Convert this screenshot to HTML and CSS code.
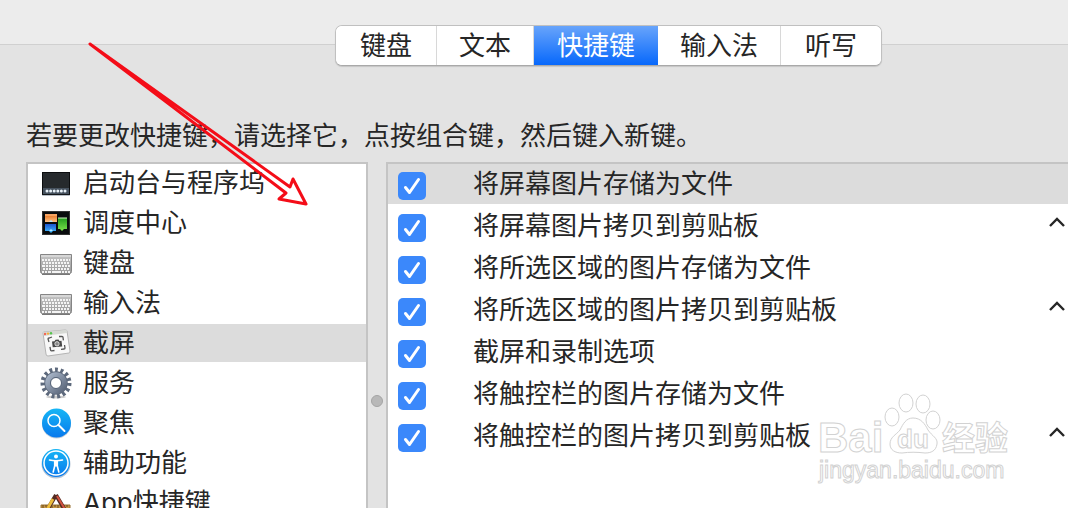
FILE: index.html
```html
<!DOCTYPE html>
<html lang="zh-CN">
<head>
<meta charset="utf-8">
<title>键盘</title>
<link rel="stylesheet" href="styles.css">
</head>
<body>
<header class="toolbar">
  <nav class="tabs">
    <button class="tab" type="button">键盘</button>
    <button class="tab" type="button">文本</button>
    <button class="tab tab-active" type="button">快捷键</button>
    <button class="tab" type="button">输入法</button>
    <button class="tab" type="button">听写</button>
  </nav>
</header>
<main class="content">
  <p class="intro">若要更改快捷键，请选择它，点按组合键，然后键入新键。</p>
  <div class="panes">
    <div class="categories">
      <button class="category" type="button">
        <svg class="icon" viewBox="0 0 32 32"><rect x="2" y="6" width="28" height="23" rx="1" fill="#b9c0c8"/><rect x="2" y="5" width="28" height="23" fill="#14171a"/><rect x="3" y="6" width="26" height="15" fill="#262a2d"/><path d="M2 21h28v6H2z" fill="#46525f"/><path d="M2.500 27V5.500h27V27" fill="none" stroke="#0b0d0f"/><g fill="#e8f1f8"><circle cx="7" cy="24" r="1.500"/><circle cx="10.600" cy="24" r="1.500"/><circle cx="14.200" cy="24" r="1.500"/><circle cx="17.800" cy="24" r="1.500"/><circle cx="21.400" cy="24" r="1.500"/><circle cx="25" cy="24" r="1.500"/></g></svg>
        启动台与程序坞
      </button>
      <button class="category" type="button">
        <svg class="icon" viewBox="0 0 32 32"><defs><linearGradient id="or" x2="0" y2="1"><stop stop-color="#e36a16"/><stop offset="1" stop-color="#ffc184"/></linearGradient><linearGradient id="bl" x2="0" y2="1"><stop stop-color="#1c55cf"/><stop offset="1" stop-color="#42c0ff"/></linearGradient><linearGradient id="gr" x2="0" y2="1"><stop stop-color="#219b1d"/><stop offset="1" stop-color="#7be34c"/></linearGradient></defs><rect x="2.500" y="4.500" width="27" height="23" fill="#090b0d" stroke="#333"/><path d="M5 7h12v8H5z" fill="url(#or)"/><path d="M5 7h12v2H5z" fill="#f7a361"/><path d="M5 17h11v7h-3l-2 2-2-2H5z" fill="url(#bl)"/><path d="M18 11h9v11h-3l-2 2-2-2h-2z" fill="url(#gr)"/><path d="M18 11h9" stroke="#d6f5c5"/><path d="M9 15l2-2 2 2zM9 24l2-2 2 2z" fill="#b6e7ff"/></svg>
        调度中心
      </button>
      <button class="category" type="button">
        <svg class="icon" viewBox="0 0 32 32"><defs><linearGradient id="kb" x2="0" y2="1"><stop stop-color="#c6c6c6"/><stop offset="1" stop-color="#989898"/></linearGradient></defs><path d="M.5 7.500h31v17q0 2-2 2h-27q-2 0-2-2z" fill="url(#kb)" stroke="#858585"/><path d="M1 9h30" stroke="#d6d6d6" stroke-width="2"/><g stroke="#f4f4f4" stroke-width="2"><path d="M2 13h28" stroke-dasharray="2 1"/><path d="M3 16h27" stroke-dasharray="2 1"/><path d="M2 19h28" stroke-dasharray="3 1 2 1 2 1 2 1 2 1"/><path d="M3 22h27" stroke-dasharray="2 1"/><path d="M2 25h28" stroke-dasharray="2 1 2 1 3 1 9 1 2 1 2 1"/></g><path d="M2 27.500h28" stroke="#777"/></svg>
        键盘
      </button>
      <button class="category" type="button">
        <svg class="icon" viewBox="0 0 32 32"><path d="M.5 7.500h31v17q0 2-2 2h-27q-2 0-2-2z" fill="url(#kb)" stroke="#858585"/><path d="M1 9h30" stroke="#d6d6d6" stroke-width="2"/><g stroke="#f4f4f4" stroke-width="2"><path d="M2 13h28" stroke-dasharray="2 1"/><path d="M3 16h27" stroke-dasharray="2 1"/><path d="M2 19h28" stroke-dasharray="3 1 2 1 2 1 2 1 2 1"/><path d="M3 22h27" stroke-dasharray="2 1"/><path d="M2 25h28" stroke-dasharray="2 1 2 1 3 1 9 1 2 1 2 1"/></g><path d="M2 27.500h28" stroke="#777"/></svg>
        输入法
      </button>
      <button class="category category-selected" type="button">
        <svg class="icon" viewBox="0 0 32 32"><path d="M3 6q0-1 1-1l21-2q2 0 2 1l3 20q0 2-1 2L8 29q-2 0-2-2z" fill="#f8f8f8" stroke="#b5b5b5"/><path d="M3 6q0-1 1-1l21-2q2 0 2 1v2L4 9z" fill="#d6d9d4"/><circle cx="5" cy="7" r="1.200" fill="#f26656"/><circle cx="8" cy="6.600" r="1.200" fill="#f6ae3b"/><circle cx="11" cy="6.300" r="1.200" fill="#54c54b"/><g fill="none" stroke="#555" stroke-width="1.300"><path d="M9 15l-1-3q0-1 1-1l3-1M19 9.500l3-.2q1 0 1 1l.4 3M24.500 18l.5 3q0 1-1 1l-3 .3M14.500 23.500l-3 .3q-1 0-1-1l-.5-3"/></g><path d="M12 14.500l2.500-.2 1-1.500 3-.2 1 1.300 2-.1.700 5.600-9.500.8z" fill="#484848"/><circle cx="17" cy="16.800" r="2.200" fill="#888" stroke="#fff" stroke-width=".7"/></svg>
        截屏
      </button>
      <button class="category" type="button">
        <svg class="icon" viewBox="0 0 32 32"><defs><linearGradient id="ge" x2="1" y2="1"><stop stop-color="#a9b6c9"/><stop offset="1" stop-color="#5b677b"/></linearGradient></defs><ellipse cx="16" cy="30" rx="10" ry="1.500" fill="#ccc"/><circle cx="16" cy="16" r="13" fill="none" stroke="#5d697c" stroke-width="5" stroke-dasharray="2.800 2.645"/><circle cx="16" cy="16" r="8.500" fill="none" stroke="#5d697c" stroke-width="6.500"/><circle cx="16" cy="16" r="8.300" fill="none" stroke="url(#ge)" stroke-width="5"/><circle cx="16" cy="16" r="5.500" fill="#fff" stroke="#526075"/></svg>
        服务
      </button>
      <button class="category" type="button">
        <svg class="icon" viewBox="0 0 32 32"><defs><linearGradient id="sp" x2="0" y2="1"><stop stop-color="#16b6f5"/><stop offset="1" stop-color="#0879ed"/></linearGradient></defs><circle cx="16.500" cy="17" r="14.500" fill="#c4ced9"/><circle cx="16.500" cy="16" r="14.500" fill="url(#sp)"/><circle cx="14" cy="13.500" r="6" fill="none" stroke="#fff" stroke-width="1.500"/><path d="M18.500 18l6 6" stroke="#fff" stroke-width="2" stroke-linecap="round"/></svg>
        聚焦
      </button>
      <button class="category" type="button">
        <svg class="icon" viewBox="0 0 32 32"><circle cx="16" cy="17" r="14.500" fill="#b8c6d6"/><circle cx="16" cy="16" r="14" fill="url(#sp)"/><circle cx="16" cy="16" r="12" fill="none" stroke="#fff" stroke-width="1.500"/><circle cx="16" cy="9.500" r="2" fill="#fff"/><path d="M9.500 13q6.500 1.600 13 0M14.700 14v5l-1.500 6M17.300 14v5l1.500 6" fill="none" stroke="#fff" stroke-width="1.600" stroke-linecap="round"/><path d="M14 13.500h4v6h-4z" fill="#fff"/></svg>
        辅助功能
      </button>
      <button class="category" type="button">
        <svg class="icon" viewBox="0 0 32 32"><path d="M1 18h29v9H1z" fill="#c49546" stroke="#987032"/><path d="M3 18v3m3-3v2m3-2v3m3-2v2m3-3v2m3-2v3m3-3v2m3-2v3m3-3v2" stroke="#6b4b1b"/><path d="M16 8L3 30M16 8l13 22" stroke="#532b22" stroke-width="4"/><path d="M17 9l12 20" stroke="#d45240" stroke-width="2"/><path d="M13 12L4 28" stroke="#edbd3c" stroke-width="3"/></svg>
        App快捷键
      </button>
    </div>
    <div class="splitter"><span class="grip"></span></div>
    <div class="shortcuts">
      <label class="shortcut shortcut-selected"><input class="check" type="checkbox" checked><span class="name">将屏幕图片存储为文件</span></label>
      <label class="shortcut"><input class="check" type="checkbox" checked><span class="name">将屏幕图片拷贝到剪贴板</span><svg class="key" viewBox="0 0 16 10"><path d="M1 9l7-7 7 7"/></svg></label>
      <label class="shortcut"><input class="check" type="checkbox" checked><span class="name">将所选区域的图片存储为文件</span></label>
      <label class="shortcut"><input class="check" type="checkbox" checked><span class="name">将所选区域的图片拷贝到剪贴板</span><svg class="key" viewBox="0 0 16 10"><path d="M1 9l7-7 7 7"/></svg></label>
      <label class="shortcut"><input class="check" type="checkbox" checked><span class="name">截屏和录制选项</span></label>
      <label class="shortcut"><input class="check" type="checkbox" checked><span class="name">将触控栏的图片存储为文件</span></label>
      <label class="shortcut"><input class="check" type="checkbox" checked><span class="name">将触控栏的图片拷贝到剪贴板</span><svg class="key" viewBox="0 0 16 10"><path d="M1 9l7-7 7 7"/></svg></label>
    </div>
  </div>
</main>
<svg class="watermark" viewBox="0 0 200 96">
  <g class="outline">
    <text class="brand" x="4" y="63">Bai</text>
    <ellipse cx="78" cy="28" rx="7" ry="9"/><ellipse cx="92" cy="14" rx="7" ry="9"/><ellipse cx="109" cy="15" rx="7" ry="9"/><ellipse cx="119" cy="31" rx="7" ry="9"/>
    <path d="M99 29c8 0 12 6 15 12 4 6 10 8 9 14-1 7-6 9-12 9-8-1-16-1-23 0-7 0-12-3-12-9 0-7 6-9 10-14 3-6 6-12 13-12z"/>
    <text class="paw" x="83" y="59">du</text>
    <text class="brand-cn" x="128" y="61">经验</text>
    <text class="address" x="5" y="89">jingyan.baidu.com</text>
  </g>
</svg>
<svg class="arrow" viewBox="0 0 230 174"><path d="M6 6L206 149l3-8 13 25-27-5 7-6z"/></svg>
</body>
</html>
```
FILE: styles.css
```css
* {
  box-sizing: border-box;
}

body {
  display: flex;
  flex-direction: column;
  height: 100vh;
  margin: 0;
  overflow: hidden;
  background: #e3e3e3;
  color: #262626;
  font: 26px/38px Inter, "Noto Sans CJK SC", sans-serif;
}

button {
  border: 0;
  color: inherit;
  font: inherit;
}

.toolbar {
  display: flex;
  align-items: flex-start;
  flex: none;
  height: 45px;
  padding: 25px 0 0 335px;
  border-bottom: 1px solid #d0d0d0;
  background: #ececec;
}

.tabs {
  display: flex;
  flex: none;
  overflow: hidden;
  border: 1px solid #c0c0c0;
  border-bottom-color: #a9a9a9;
  border-radius: 7px;
  background: #fff;
  box-shadow: 0 1px 1px #0002;
}

.tab {
  padding: 1px 22px 0;
  border-right: 1px solid #d8d8d8;
  background: #fff;
}

.tab:first-child,
.tab:last-child {
  padding-right: 24px;
  padding-left: 24px;
}

.tab:last-child {
  border-right: 0;
}

.tab-active {
  padding-right: 23px;
  padding-left: 23px;
  border-right: 0;
  background: linear-gradient(#68a4fb, #0768fb);
  color: #fff;
}

.content {
  display: flex;
  flex: 1;
  flex-direction: column;
  min-height: 0;
  padding: 72px 0 0 26px;
}

.intro {
  margin: 0 0 7px;
  white-space: nowrap;
}

.panes {
  display: grid;
  grid-template-columns: 342px 18px 1fr;
  flex: 1;
  min-height: 0;
}

.categories,
.shortcuts {
  overflow: hidden;
  border: 2px solid #c4c4c4;
  border-bottom: 0;
  background: #fff;
}

.shortcuts {
  border-right: 0;
}

.category {
  display: flex;
  align-items: center;
  gap: 11px;
  width: 100%;
  height: 38px;
  margin-bottom: 2px;
  padding: 0 12px;
  background: #fff;
  text-align: left;
  white-space: nowrap;
}

.category-selected,
.shortcut-selected {
  background: #dcdcdc;
}

.icon {
  flex: none;
  width: 32px;
  height: 32px;
}

.splitter {
  display: flex;
  justify-content: center;
  padding-top: 233px;
}

.grip {
  width: 12px;
  height: 12px;
  border: 1px solid #a4a4a4;
  border-radius: 50%;
  background: #b8b8b8;
}

.shortcut {
  display: flex;
  align-items: center;
  height: 40px;
  margin-bottom: 2px;
  padding: 0 3px 0 10px;
}

.check {
  flex: none;
  width: 28px;
  height: 28px;
  margin: 4px 47px 0 0;
  appearance: none;
  border-radius: 5px;
  background: #3b88fb url("data:image/svg+xml,%3Csvg xmlns='http://www.w3.org/2000/svg' viewBox='0 0 28 28'%3E%3Cpath d='M7.500 15.500l4 5L20.500 7.500' fill='none' stroke='white' stroke-width='3' stroke-linecap='round' stroke-linejoin='round'/%3E%3C/svg%3E");
}

.name {
  flex: 1;
  white-space: nowrap;
}

.key {
  flex: none;
  width: 16px;
  height: 10px;
  margin-bottom: 8px;
  fill: none;
  stroke: #262626;
  stroke-width: 2.4;
}

.watermark {
  position: absolute;
  top: 389px;
  right: 54px;
  width: 200px;
  height: 96px;
  pointer-events: none;
}

.outline {
  fill: #fff;
  stroke: #d2d2d2;
  stroke-width: 1;
}

.brand {
  font: bold 42px "Liberation Sans", sans-serif;
}

.paw {
  font: bold 26px "Liberation Sans", sans-serif;
}

.brand-cn {
  font: bold 33px "Noto Sans CJK SC", sans-serif;
}

.address {
  font: 23px "Liberation Sans", sans-serif;
}

.arrow {
  position: absolute;
  top: 38px;
  left: 84px;
  width: 230px;
  height: 174px;
  fill: none;
  stroke: #f40d18;
  stroke-width: 3;
  stroke-linejoin: round;
  pointer-events: none;
}
```
